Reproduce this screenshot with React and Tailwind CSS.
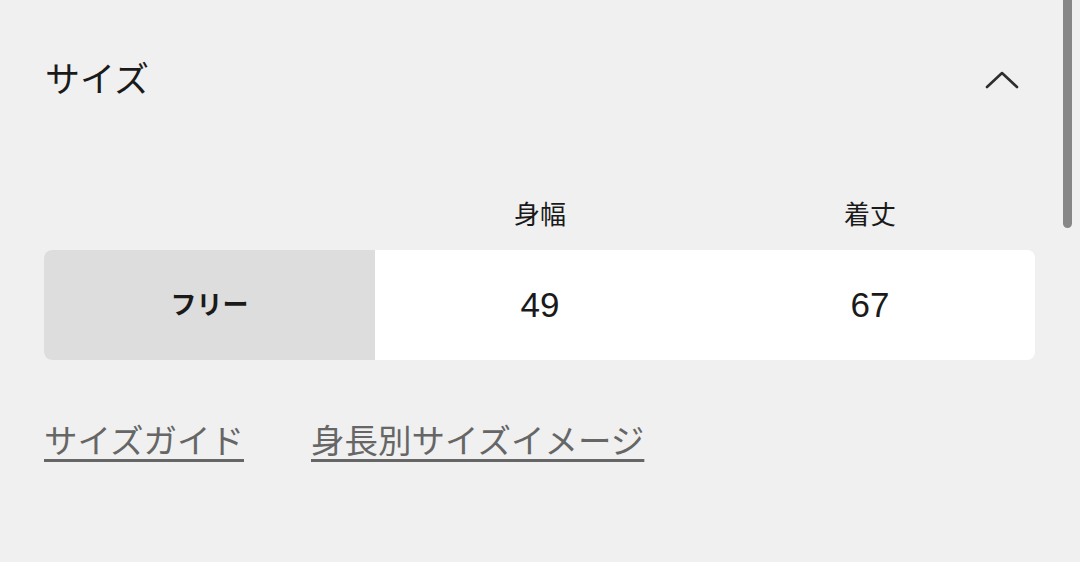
export default function App() {
  return (
    <div className="relative min-h-[562px] w-[1080px] overflow-hidden bg-[#f0f0f0] pl-[44px] pr-[45px] font-['Liberation_Sans','Noto_Sans_CJK_JP',sans-serif] text-[#1a1a1a]">
      {/* Scrollbar */}
      <div className="absolute right-[8px] top-[-20px] h-[248px] w-[9px] rounded-full bg-[#878787]" />

      {/* Header */}
      <div className="flex items-center justify-between pt-[56px]">
        <h2 className="pl-[1px] text-[35px] leading-[48px] font-normal">サイズ</h2>
        <svg className="mr-[16px]" width="34" height="20" viewBox="0 0 34 20" fill="none">
          <path d="M2 17L17 3L32 17" stroke="#2e2e2e" strokeWidth="2.6" strokeLinecap="round" strokeLinejoin="round" />
        </svg>
      </div>

      {/* Column titles */}
      <div className="mt-[93px] grid grid-cols-[331px_1fr_1fr] text-[26px] leading-[36px]">
        <div />
        <div className="text-center">身幅</div>
        <div className="text-center">着丈</div>
      </div>

      {/* Table */}
      <div className="mt-[17px] grid h-[110px] grid-cols-[331px_1fr_1fr] overflow-hidden rounded-[8px] bg-white">
        <div className="flex items-center justify-center bg-[#dddddd] text-[26px] font-bold">フリー</div>
        <div className="flex items-center justify-center text-[35px]">49</div>
        <div className="flex items-center justify-center text-[35px]">67</div>
      </div>

      {/* Links */}
      <div className="mt-[60px] flex gap-[67px] text-[33.5px] leading-[44px] text-[#666666]">
        <a href="#" className="underline decoration-[2.5px] underline-offset-[6px]">サイズガイド</a>
        <a href="#" className="underline decoration-[2.5px] underline-offset-[6px]">身長別サイズイメージ</a>
      </div>
    </div>
  );
}
